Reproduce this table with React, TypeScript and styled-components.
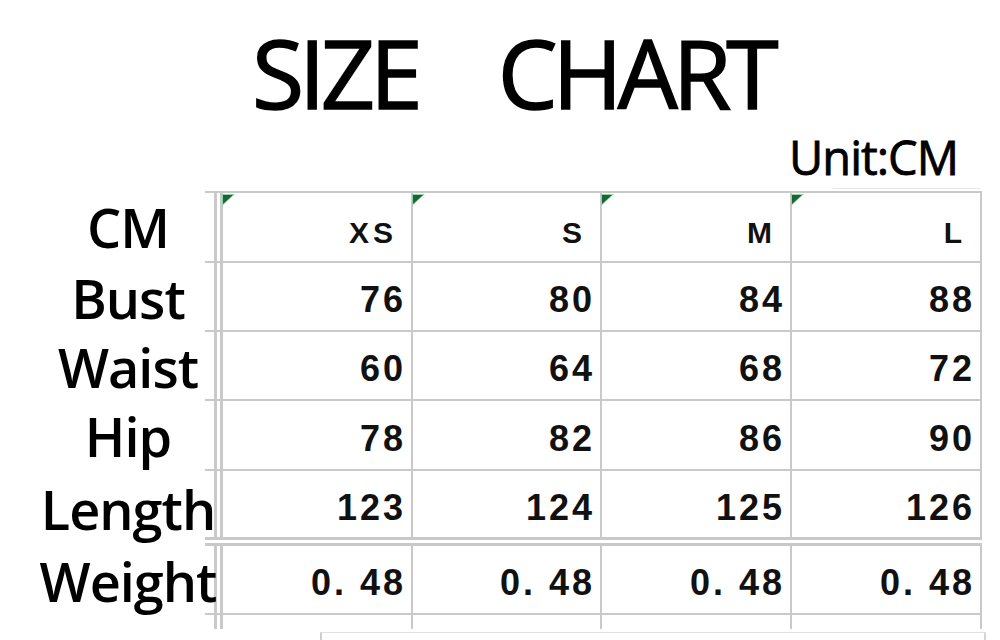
import React from 'react';
import styled, { createGlobalStyle } from 'styled-components';

const GlobalStyle = createGlobalStyle`
  html, body {
    margin: 0;
    padding: 0;
    background: #ffffff;
  }
  body {
    width: 1000px;
    height: 640px;
    overflow: hidden;
  }
`;

const LINE = '#c9c9c9';

const Page = styled.div`
  width: 1000px;
  height: 640px;
  background: #fff;
  color: #000;
  padding-top: 25px;
  box-sizing: border-box;
`;

const Title = styled.h1`
  display: flex;
  gap: 80px;
  margin: 0;
  padding-left: 252px;
  font-family: 'Open Sans', 'Noto Sans', sans-serif;
  font-weight: 400;
  font-size: 95px;
  line-height: 95px;
  letter-spacing: -5px;
  color: #000;
  -webkit-text-stroke: 1.5px #000;
`;

const UnitBar = styled.div`
  display: flex;
  justify-content: flex-end;
  margin-top: 14px;
  padding-right: 42px;
  font-family: 'Open Sans', 'Noto Sans', sans-serif;
  font-weight: 400;
  font-size: 47px;
  line-height: 47px;
  letter-spacing: -1px;
  -webkit-text-stroke: 0.8px #000;
`;

const GhostRule = styled.div`
  margin: 7px 0 0 833px;
  width: 147px;
  height: 2px;
  border-top: 1px solid #e6e6e6;
`;

const Table = styled.div`
  display: flex;
  flex-direction: column;
`;

const Row = styled.div<{ $h: number }>`
  display: flex;
  height: ${(p) => p.$h}px;
`;

const Label = styled.div`
  flex: 0 0 214px;
  min-width: 0;
  box-sizing: border-box;
  padding-left: 42px;
  margin-right: -9px;
  display: flex;
  align-items: center;
  justify-content: center;
  white-space: nowrap;
  font-family: 'Open Sans', 'Noto Sans', sans-serif;
  font-weight: 600;
  font-size: 54px;
  letter-spacing: -1px;
  position: relative;
  z-index: 1;
`;

const Lines = styled.div<{ $top?: boolean; $bottom?: 'single' | 'double' | 'none' }>`
  display: flex;
  flex: 0 0 auto;
  box-sizing: border-box;
  border-top: ${(p) => (p.$top ? `2px solid ${LINE}` : 'none')};
  border-bottom: ${(p) =>
    p.$bottom === 'double' ? `9px double ${LINE}` : p.$bottom === 'none' ? 'none' : `2px solid ${LINE}`};
`;

const Stub = styled.div`
  flex: 0 0 9px;
`;

const Cells = styled.div`
  display: grid;
  grid-template-columns: 190px 189px 190px 190px;
  border-left: 9px double ${LINE};
`;

const Cell = styled.div<{ $head?: boolean }>`
  position: relative;
  box-sizing: border-box;
  border-right: 2px solid ${LINE};
  display: flex;
  align-items: center;
  justify-content: flex-end;
  padding-top: ${(p) => (p.$head ? 12 : 7)}px;
  padding-right: ${(p) => (p.$head ? 14 : 5)}px;
  font-family: 'Liberation Sans', Arial, sans-serif;
  font-weight: 700;
  font-size: ${(p) => (p.$head ? 30 : 36)}px;
  letter-spacing: ${(p) => (p.$head ? 4 : 3)}px;
  color: #111;
`;

const Marker = styled.svg`
  position: absolute;
  left: -1px;
  top: 1px;
  width: 13px;
  height: 12px;
`;

const Footer = styled.div`
  margin: 3px 0 0 320px;
  width: 662px;
  height: 8px;
  border-top: 1px solid #e2e2e2;
  border-left: 2px solid #cfcfcf;
  border-right: 2px solid #d6d6d6;
`;

const sizes = ['XS', 'S', 'M', 'L'];

const rows: { label: string; values: string[]; h: number; bottom?: 'single' | 'double' }[] = [
  { label: 'Bust', values: ['76', '80', '84', '88'], h: 69 },
  { label: 'Waist', values: ['60', '64', '68', '72'], h: 69 },
  { label: 'Hip', values: ['78', '82', '86', '90'], h: 70 },
  { label: 'Length', values: ['123', '124', '125', '126'], h: 75, bottom: 'double' },
  { label: 'Weight', values: ['0. 48', '0. 48', '0. 48', '0. 48'], h: 69 },
];

const CornerMark = () => (
  <Marker viewBox="0 0 13 12">
    <polygon points="0,0 13,0 0,12" fill="#8fd3a6" />
    <polygon points="1,1 11,1 1,10" fill="#1c6534" />
  </Marker>
);

export default function App() {
  return (
    <>
      <GlobalStyle />
      <Page>
        <Title>
          <span>SIZE</span>
          <span>CHART</span>
        </Title>
        <UnitBar>Unit:CM</UnitBar>
        <GhostRule />
        <Table>
          <Row $h={72}>
            <Label>CM</Label>
            <Lines $top>
              <Stub />
              <Cells>
                {sizes.map((s) => (
                  <Cell key={s} $head>
                    <CornerMark />
                    {s}
                  </Cell>
                ))}
              </Cells>
            </Lines>
          </Row>
          {rows.map((r) => (
            <Row key={r.label} $h={r.h}>
              <Label>{r.label}</Label>
              <Lines $bottom={r.bottom ?? 'single'}>
                <Stub />
                <Cells>
                  {r.values.map((v, i) => (
                    <Cell key={i}>{v}</Cell>
                  ))}
                </Cells>
              </Lines>
            </Row>
          ))}
          <Row $h={14}>
            <Label />
            <Lines $bottom="none">
              <Stub />
              <Cells>
                {sizes.map((s) => (
                  <Cell key={s} />
                ))}
              </Cells>
            </Lines>
          </Row>
        </Table>
        <Footer />
      </Page>
    </>
  );
}
